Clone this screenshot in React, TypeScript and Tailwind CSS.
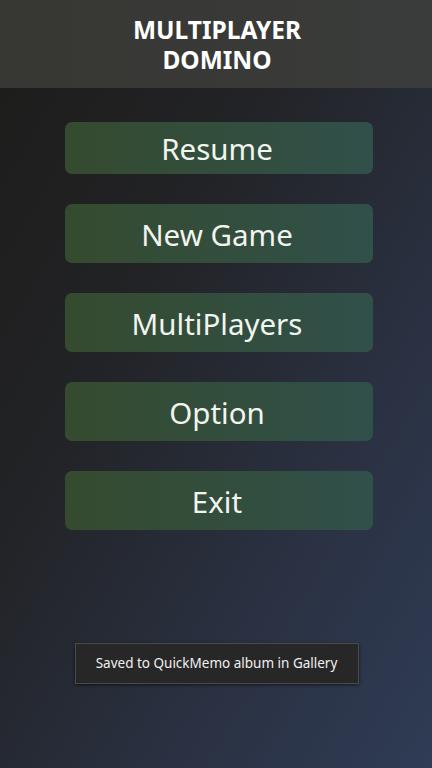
import React from "react";

const items = [
  { label: "Resume", h: "h-[52px]", mt: "mt-[34px]" },
  { label: "New Game", h: "h-[59px]", mt: "mt-[30px]" },
  { label: "MultiPlayers", h: "h-[59px]", mt: "mt-[30px]" },
  { label: "Option", h: "h-[59px]", mt: "mt-[30px]" },
  { label: "Exit", h: "h-[59px]", mt: "mt-[30px]" },
];

export default function App() {
  return (
    <div
      className="w-[432px] h-[768px] flex flex-col bg-[linear-gradient(120deg,#1d1c1a_0%,#222326_35%,#2a3142_70%,#2f3c55_100%)] overflow-hidden"
      style={{ fontFamily: '"Noto Sans", "Open Sans", sans-serif' }}
    >
      <div className="h-[88px] flex flex-col items-center justify-center bg-[linear-gradient(90deg,#373733,#3a3c3b)] pl-[2px]">
        <div className="text-white font-bold text-[24.5px] leading-[30px] text-center pt-[2px]">
          MULTIPLAYER
          <br />
          DOMINO
        </div>
      </div>
      <div className="flex flex-col items-center pl-[6px]">
        {items.map((it) => (
          <div
            key={it.label}
            className={`${it.mt} ${it.h} w-[308px] rounded-[7px] flex items-center justify-center bg-[linear-gradient(90deg,#354b2f,#30504a)] text-[#f2f5ef] text-[29.5px] pt-[3px] pr-[4px]`}
          >
            {it.label}
          </div>
        ))}
      </div>
      <div className="flex justify-center mt-[113px] pl-[1px]">
        <div className="w-[284px] h-[41px] flex items-center justify-center bg-[#272727] border border-[#4a4a4a] shadow-[0_1px_3px_rgba(0,0,0,0.6)] text-[#f0f0f0] text-[13.5px]">
          Saved to QuickMemo album in Gallery
        </div>
      </div>
    </div>
  );
}
